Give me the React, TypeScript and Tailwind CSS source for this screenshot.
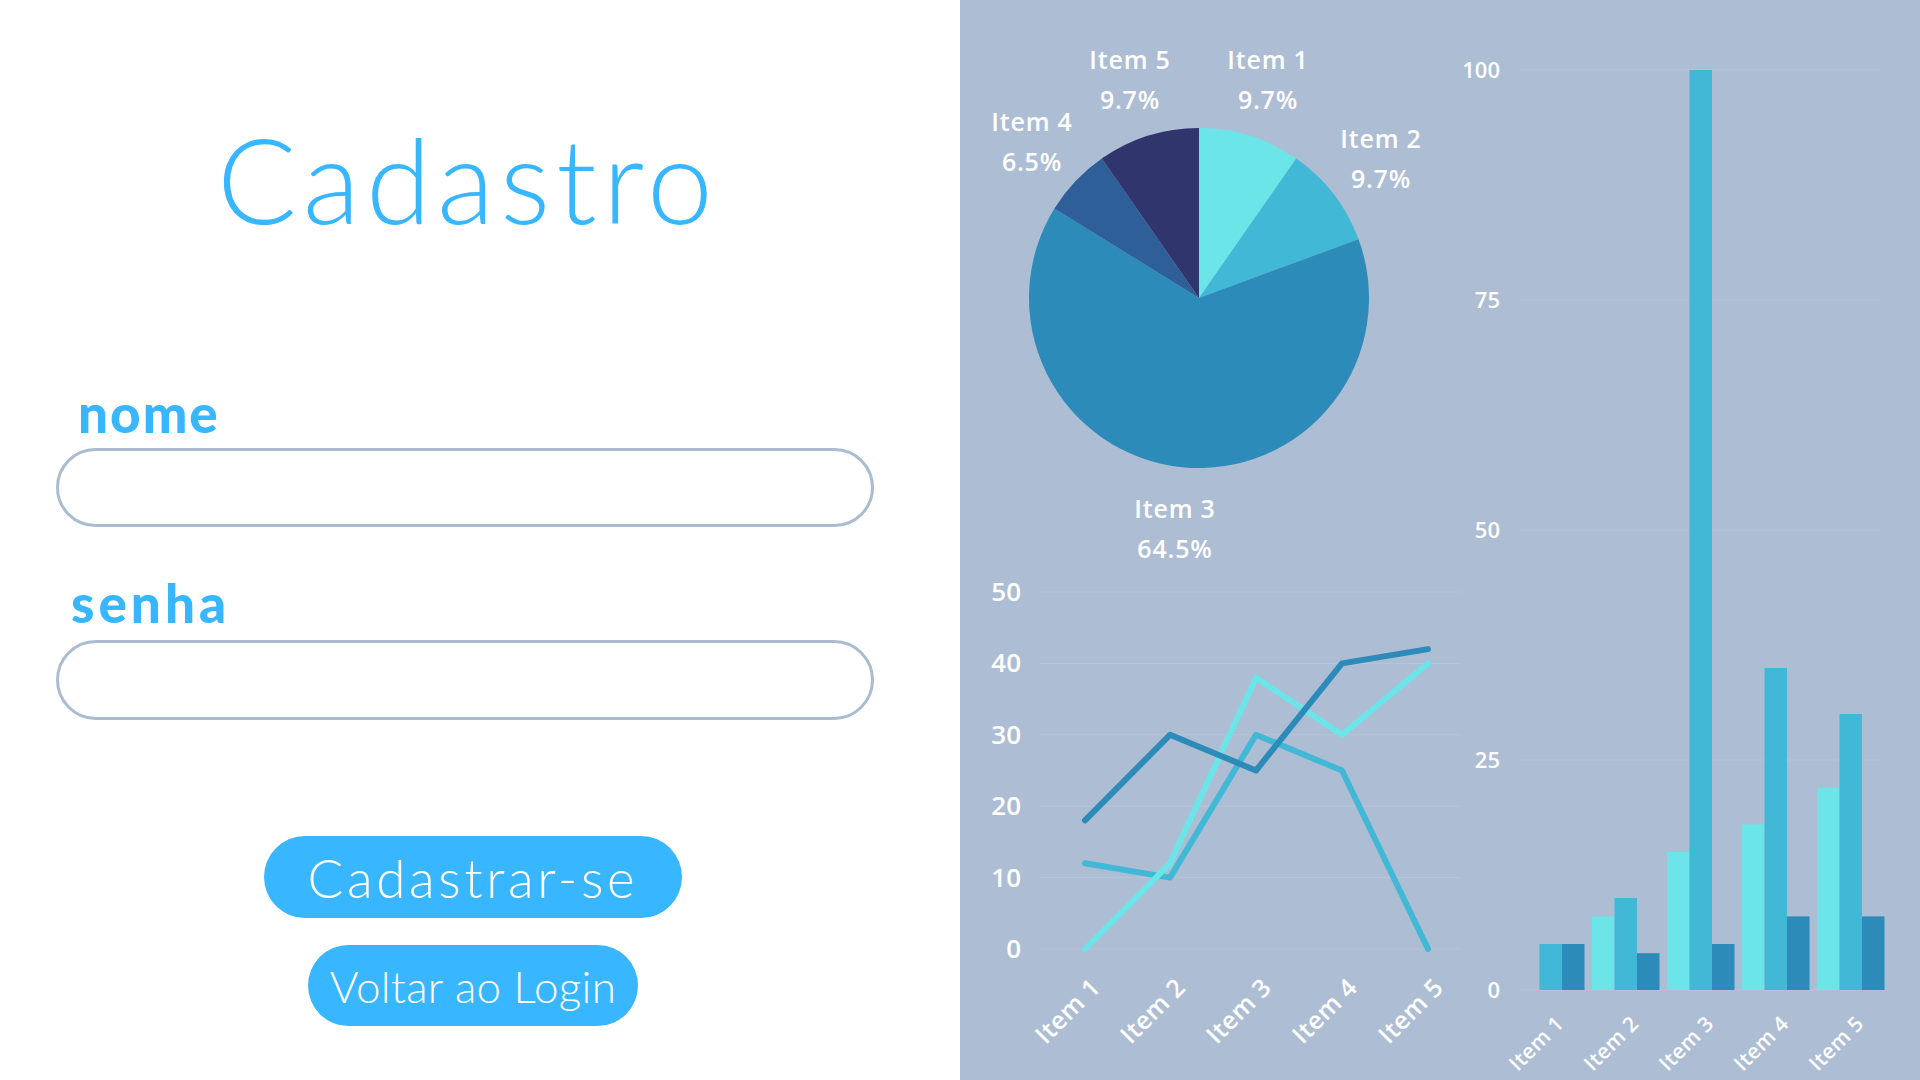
import React from 'react';

const C1 = '#6ce5e8';
const C2 = '#41b8d5';
const C3 = '#2d8bba';
const C4 = '#2f5f98';
const C5 = '#31356e';

const chartFont = { fontFamily: '"Open Sans", "DejaVu Sans", sans-serif' };

// pie chart (local coords inside a 500x570 box)
const pieSlices = [
  { label: 'Item 1', pct: '9.7%', value: 9.7, color: C1, lx: 308, ly: 69 },
  { label: 'Item 2', pct: '9.7%', value: 9.7, color: C2, lx: 421, ly: 148 },
  { label: 'Item 3', pct: '64.5%', value: 64.5, color: C3, lx: 215, ly: 518 },
  { label: 'Item 4', pct: '6.5%', value: 6.5, color: C4, lx: 72, ly: 131 },
  { label: 'Item 5', pct: '9.7%', value: 9.7, color: C5, lx: 170, ly: 69 },
];

const PieChart: React.FC = () => {
  const cx = 239;
  const cy = 298;
  const r = 170;
  const total = pieSlices.reduce((s, p) => s + p.value, 0);
  let acc = 0;
  const pt = (a: number) => `${cx + r * Math.sin(a)} ${cy - r * Math.cos(a)}`;

  return (
    <svg width="500" height="570" viewBox="0 0 500 570" className="block">
      {pieSlices.map(s => {
        const a0 = (acc / total) * Math.PI * 2;
        acc += s.value;
        const a1 = (acc / total) * Math.PI * 2;
        const large = a1 - a0 > Math.PI ? 1 : 0;
        return (
          <path
            key={s.label}
            d={`M ${cx} ${cy} L ${pt(a0)} A ${r} ${r} 0 ${large} 1 ${pt(a1)} Z`}
            fill={s.color}
          />
        );
      })}
      {pieSlices.map(s => (
        <text key={s.label} x={s.lx} y={s.ly} textAnchor="middle" fill="#ffffff" fontSize="25" fontWeight="600" letterSpacing="0.8" style={chartFont}>
          <tspan x={s.lx}>{s.label}</tspan>
          <tspan x={s.lx} dy="40">{s.pct}</tspan>
        </text>
      ))}
    </svg>
  );
};

// line chart (local coords inside a 500x510 box)
const lineX = [125, 210, 296, 382, 468];
const lineSeries = [
  { color: C2, values: [12, 10, 30, 25, 0] },
  { color: C1, values: [0, 12, 38, 30, 40] },
  { color: C3, values: [18, 30, 25, 40, 42] },
];
const ly = (v: number) => 379 - v * 7.14;

const LineChart: React.FC = () => (
  <svg width="500" height="510" viewBox="0 0 500 510" className="block">
    {[0, 10, 20, 30, 40, 50].map(t => (
      <g key={t}>
        <line x1="80" x2="500" y1={ly(t)} y2={ly(t)} stroke="#ffffff" strokeOpacity="0.12" strokeWidth="1" />
        <text x="61" y={ly(t) + 9} textAnchor="end" fill="#ffffff" fontSize="26" fontWeight="600" style={chartFont}>
          {t}
        </text>
      </g>
    ))}
    {lineSeries.map((s, i) => (
      <polyline
        key={i}
        points={s.values.map((v, j) => `${lineX[j]},${ly(v)}`).join(' ')}
        fill="none"
        stroke={s.color}
        strokeWidth="6"
        strokeLinecap="round"
        strokeLinejoin="round"
      />
    ))}
    {lineX.map((x, i) => (
      <text
        key={i}
        x={x + 17}
        y={419}
        transform={`rotate(-45 ${x + 17} 419)`}
        textAnchor="end"
        fill="#ffffff"
        fontSize="25"
        fontWeight="600"
        letterSpacing="0.5"
        style={chartFont}
      >
        {`Item ${i + 1}`}
      </text>
    ))}
  </svg>
);

// bar chart (local coords inside a 460x1080 box)
const barGroups = [
  [0, 5, 5],
  [8, 10, 4],
  [15, 100, 5],
  [18, 35, 8],
  [22, 30, 8],
];
const barColors = [C1, C2, C3];
const by = (v: number) => 990 - v * 9.2;

const BarChart: React.FC = () => (
  <svg width="460" height="1080" viewBox="0 0 460 1080" className="block">
    {[0, 25, 50, 75, 100].map(t => (
      <g key={t}>
        <line x1="60" x2="420" y1={by(t)} y2={by(t)} stroke="#ffffff" strokeOpacity="0.12" strokeWidth="1" />
        <text x="40" y={by(t) + 8} textAnchor="end" fill="#ffffff" fontSize="22" fontWeight="600" style={chartFont}>
          {t}
        </text>
      </g>
    ))}
    {barGroups.map((g, i) => (
      <g key={i}>
        {g.map((v, j) =>
          v > 0 ? (
            <rect key={j} x={57 + i * 75 + j * 22.5} y={by(v)} width="22.5" height={v * 9.2} fill={barColors[j]} />
          ) : null
        )}
        <text
          x={105 + i * 75}
          y={1025}
          transform={`rotate(-45 ${105 + i * 75} 1025)`}
          textAnchor="end"
          fill="#ffffff"
          fontSize="21"
          fontWeight="600"
          letterSpacing="0.4"
          style={chartFont}
        >
          {`Item ${i + 1}`}
        </text>
      </g>
    ))}
  </svg>
);

const SignUp: React.FC = () => (
  <div className="w-[960px] h-[1080px] bg-white pl-[56px] pt-[120px]" style={{ fontFamily: 'Lato, "Liberation Sans", sans-serif' }}>
    <div className="w-[818px] flex flex-col">
      {/* Title */}
      <h1 className="self-center ml-[6px] text-[118px] leading-none font-light tracking-[6px] text-[#38b6ff]">Cadastro</h1>

      {/* Nome */}
      <label className="mt-[148px] ml-[22px] text-[53px] leading-none font-black tracking-[2px] text-[#38b6ff]">nome</label>
      <input type="text" className="mt-[9px] h-[79px] w-full rounded-full border-[3px] border-[#abbbd0] bg-white px-8 outline-none" />

      {/* Senha */}
      <label className="mt-[49px] ml-[15px] text-[53px] leading-none font-black tracking-[4px] text-[#38b6ff]">senha</label>
      <input type="password" className="mt-[11px] h-[80px] w-full rounded-full border-[3px] border-[#abbbd0] bg-white px-8 outline-none" />

      {/* Actions */}
      <button className="mt-[116px] self-center ml-[16px] w-[418px] h-[82px] rounded-full bg-[#38b6ff] text-white text-[53px] leading-none font-light tracking-[3.6px] flex items-center justify-center">
        Cadastrar-se
      </button>
      <button className="mt-[27px] self-center ml-[16px] w-[330px] h-[81px] rounded-full bg-[#38b6ff] text-white text-[44px] leading-none font-light tracking-[0.3px] flex items-center justify-center">
        Voltar ao Login
      </button>
    </div>
  </div>
);

export default function App() {
  return (
    <div className="flex w-[1920px] h-[1080px] overflow-hidden">
      <SignUp />
      <div className="w-[960px] h-[1080px] bg-[#adbdd4] flex">
        <div className="w-[500px] flex flex-col">
          <PieChart />
          <LineChart />
        </div>
        <BarChart />
      </div>
    </div>
  );
}
